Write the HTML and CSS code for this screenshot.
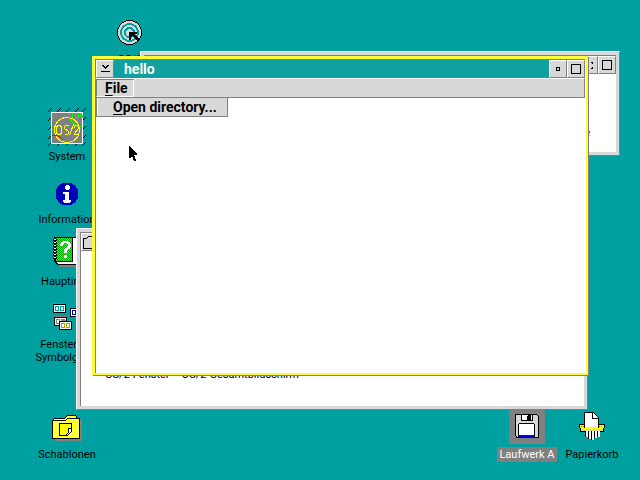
FILE: index.html
```
<!DOCTYPE html>
<html lang="de">
<head>
<meta charset="utf-8">
<title>hello</title>
<link rel="stylesheet" href="styles.css">
</head>
<body>
<main class="desktop">
  <div class="icon icon-os2">
    <svg width="26" height="26" viewBox="0 0 26 26" shape-rendering="crispEdges">
      <circle cx="12.500" cy="12.500" r="12" fill="#d8d8d8" stroke="#000"/>
      <g fill="none" stroke="#00a0a0" stroke-width="2"><circle cx="12.500" cy="12.500" r="8.500"/><circle cx="12.500" cy="12.500" r="4.500"/></g>
      <path d="M12 12h8v2h-3l1 1 1 1 1 1 2 2-2 2-5-5-1 1v3h-2z"/>
    </svg>
    <span>OS/2</span>
  </div>

  <div class="icon icon-system">
    <svg width="38" height="38" viewBox="0 0 38 38" shape-rendering="crispEdges">
      <path d="M0 4l4-4M9 4l4-4M18 4l4-4M27 4l4-4M34 4l4-4M0 13l4-4M0 22l4-4M0 31l4-4M0 38l4-4M9 38l4-4M18 38l4-4M27 38l4-4M34 13l4-4M34 22l4-4M34 31l4-4M34 38l4-4" stroke="#000"/>
      <rect x="3.500" y="4.500" width="31" height="31" fill="#808080" stroke="#fff"/>
      <circle cx="19" cy="22" r="12.500" fill="none" stroke="#ff0"/>
      <path d="M21.500 5v4h3V5M27.500 5v4h3V5M34 5.500h-2v2h2v2h-2M22 11l3 4 4 3h5" fill="none" stroke="#0f0"/>
      <path d="M4 27h4l4 2 3 3" fill="none" stroke="#f00"/>
      <path d="M9.500 17.500h3l1 2v5l-1 2h-3l-1-2v-5zM20.500 17.500h-3l-1 1v2l4 3v2l-1 1h-3M21.500 27.500l4-11M26.500 19.500v-1l1-1h2l1 1v2l-4 5v1h4" fill="none" stroke="#ff0"/>
    </svg>
    <span>System</span>
  </div>

  <div class="icon icon-info">
    <svg width="24" height="24" viewBox="0 0 24 24" shape-rendering="crispEdges">
      <circle cx="12" cy="12" r="11.500" fill="#0000b8"/>
      <path d="M11 3h3v1h1v3h-1v1h-3V7h-1V4h1zM8 10h6v8h2v2h-1v1H9v-1H8v-2h2v-6H8z" fill="#fff"/>
    </svg>
    <span>Information</span>
  </div>

  <div class="icon icon-index">
    <svg width="32" height="32" viewBox="0 0 32 32" shape-rendering="crispEdges">
      <defs><pattern id="green" width="2" height="2" patternUnits="userSpaceOnUse"><path d="M0 0h2v2H0z" fill="#00b000"/><path d="M0 0h1v1H0zM1 1h1v1H1z" fill="#40e040"/></pattern></defs>
      <path d="M4 28h27v3H7z" fill="#808080"/>
      <path d="M1 1h30v28H4l-3-3z"/>
      <path d="M2 2h28v26H5l-3-3z" fill="#fff"/>
      <path d="M2 1h18v25H2z"/>
      <path d="M3 2h16v23H3z" fill="url(#green)"/>
      <path d="M0 3h4v2H0zM0 6h4v2H0zM0 9h4v2H0zM0 12h4v2H0zM0 15h4v2H0zM0 18h4v2H0zM0 21h4v2H0z"/>
      <path d="M1 3h2v1H1zM1 6h2v1H1zM1 9h2v1H1zM1 12h2v1H1zM1 15h2v1H1zM1 18h2v1H1zM1 21h2v1H1z" fill="#fff"/>
      <path d="M8 6h2V5h5v1h2v2h1v3h-1v2h-2v1h-1v3h-3v-4h1v-1h2v-2h1V8h-1V7h-3v1h-1v2H7V8h1zM11 19h3v3h-3z" fill="#fff"/>
    </svg>
    <span>Hauptindex</span>
  </div>

  <div class="icon icon-windows">
    <svg width="30" height="28" viewBox="0 0 30 28" shape-rendering="crispEdges">
      <path d="M0 1h13v9H0z"/><path d="M1 2h11v7H1z" fill="#fff"/>
      <path d="M2 3h4v5H2zM7 3h4v5H7z" fill="#00a0a0"/><path d="M3 4h2v3H3zM8 4h2v3H8z" fill="#fff"/>
      <path d="M17 5h13v9H17z"/><path d="M18 6h11v7H18z" fill="#fff"/>
      <path d="M19 7h4v5h-4zM24 7h4v5h-4z" fill="#0000b8"/><path d="M20 8h2v3h-2zM25 8h2v3h-2z" fill="#fff"/>
      <path d="M1 14h13v9H1z"/><path d="M2 15h11v7H2z" fill="#fff"/>
      <path d="M3 16h4v5H3zM8 16h4v5H8z" fill="#808080"/><path d="M4 17h2v3H4z" fill="#fff"/>
      <path d="M6 18h13v9H6z"/><path d="M7 19h11v7H7z" fill="#fff"/>
      <path d="M8 20h4v5H8zM13 20h4v5h-4z" fill="#a8a000"/><path d="M9 21h2v3H9zM14 21h2v3h-2z" fill="#fff"/>
      <path d="M0 .5h13M17 4.500h13M1 13.500h13M6 17.500h13" stroke="#a08080" stroke-dasharray="1 1"/>
    </svg>
    <span>Fenster auf<br>Symbolgröße</span>
  </div>

  <div class="icon icon-templates">
    <svg width="30" height="26" viewBox="0 0 30 26" shape-rendering="crispEdges">
      <defs><pattern id="yellow" width="2" height="2" patternUnits="userSpaceOnUse"><path d="M0 0h2v2H0z" fill="#ffff30"/><path d="M0 0h1v1H0z" fill="#fff"/></pattern></defs>
      <path d="M3 5h27v21H3z" fill="#808080"/>
      <path d="M.5 5.500l2-2h10l3-3h8l2 3h2v20H.5z" fill="url(#yellow)" stroke="#000"/>
      <path d="M1 5.500h12l3-2h11" fill="none" stroke="#000"/>
      <path d="M7.500 8.500h12v8l-4 4h-8z" fill="#ff0" stroke="#000"/>
      <path d="M19.500 13.500h-3v4l-3 3h2l4-4z" fill="#fff" stroke="#000"/>
    </svg>
    <span>Schablonen</span>
  </div>

  <div class="icon icon-drive">
    <i class="picked"><svg width="24" height="24" viewBox="0 0 24 24" shape-rendering="crispEdges">
      <path d="M.5.500h21l2 2v21H2l-1.500-2z" fill="#d8d8d8" stroke="#000"/>
      <path d="M6 1h12v6H6z"/><path d="M7 1h6v5H7zM16 1h1v5h-1z" fill="#fff"/><path d="M12 2h2v4h-2z"/>
      <path d="M3.500 10.500l1-1h14l1 1v13h-16z" fill="#fff" stroke="#000"/>
      <path d="M4 21h15v2H4z" fill="#00f"/>
    </svg></i>
    <span>Laufwerk A</span>
  </div>

  <div class="icon icon-shredder">
    <svg width="26" height="29" viewBox="0 0 26 29" shape-rendering="crispEdges">
      <path d="M0 12h26v4h-1v4H1v-4H0z"/>
      <path d="M1 13h24v3h-1v3H2v-3H1z" fill="#ff0"/>
      <path d="M2 14.500h22" stroke="#807000" stroke-dasharray="1 1"/>
      <path d="M2 17h22v2H2z" fill="#d8d8a0"/>
      <path d="M5.500 15.500V.5h9l5 5v10z" fill="#fff" stroke="#000"/><path d="M13.500.5v6h6" fill="none" stroke="#000"/>
      <path d="M6 15h13v1H6z" fill="#ff0"/>
      <path d="M7.500 19v6M10.500 19v8M13.500 19v9M16.500 19v7M19.500 19v6" stroke="#fff" stroke-width="2"/>
      <path d="M6.500 19v6M9.500 19v8M12.500 19v9M15.500 19v7M18.500 19v6" stroke="#000"/>
    </svg>
    <span>Papierkorb</span>
  </div>

  <section class="window back-upper">
    <header class="titlebar">
      <span class="title"></span>
      <button class="tool" aria-label="Minimieren"><svg width="7" height="7" viewBox="0 0 7 7" shape-rendering="crispEdges"><path d="M.5 2V.5H2M5 .5h1.500V2M6.500 5v1.500H5M2 6.500H.5V5" fill="none" stroke="#000"/></svg></button>
      <button class="tool" aria-label="Maximieren"><b class="large"></b></button>
    </header>
    <div class="content"><span class="peek">e</span></div>
  </section>

  <section class="window back-lower">
    <header class="titlebar">
      <button class="tool" aria-label="Systemmenü"><svg width="14" height="14" viewBox="0 0 14 14" shape-rendering="crispEdges"><path d="M.5 13.500v-10h3l2-2h4l2 2h4v10z" fill="#d8d8d8" stroke="#000"/></svg></button>
      <span class="title"></span>
    </header>
    <div class="content"><ul class="names"><li>OS/2-Fenster</li><li>OS/2-Gesamtbildschirm</li></ul></div>
  </section>

  <section class="window active">
    <header class="titlebar">
      <button class="tool" aria-label="System menu"><svg width="9" height="8" viewBox="0 0 9 8" shape-rendering="crispEdges"><path d="M1 0h2v1h1v1h1V1h1V0h2v1H7v1H6v1H5v1H4V3H3V2H2V1H1zM0 6h9v1H0z"/></svg></button>
      <h1 class="title">hello</h1>
      <button class="tool" aria-label="Minimize"><b class="small"></b></button>
      <button class="tool" aria-label="Maximize"><b class="large"></b></button>
    </header>
    <nav class="menubar">
      <button class="menu"><u>F</u>ile</button>
      <div class="popup"><button class="entry"><u>O</u>pen directory...</button></div>
    </nav>
    <div class="content"></div>
  </section>

  <svg class="pointer" width="10" height="16" viewBox="0 0 10 16" shape-rendering="crispEdges"><path d="M1 0l8 8v1H6l1 2 1 3v1H6l-1-3-1-2-2 2H1z"/></svg>
</main>
</body>
</html>
```
FILE: styles.css
```
* { box-sizing: border-box; }
body { margin: 0; font: 11px/13px Roboto, "Liberation Sans", sans-serif; color: #000; }
button { font: inherit; color: inherit; padding: 0; border: 0; background: none; }
h1, ul { margin: 0; padding: 0; list-style: none; }
svg { display: block; }

.desktop { position: relative; min-height: 100vh; overflow: hidden; background: #00a0a0; }

.icon { position: absolute; display: flex; flex-direction: column; align-items: center; gap: 6px; width: 80px; text-align: center; }
.icon span { padding: 1px 2px; white-space: nowrap; }
.icon-os2 { left: 90px; top: 20px; }
.icon-system { left: 27px; top: 108px; gap: 3px; }
.icon-info { left: 27px; top: 182px; }
.icon-index { left: 29px; top: 236px; }
.icon-windows { left: 28px; top: 303px; }
.icon-templates { left: 27px; top: 415px; }
.icon-drive { right: 73px; bottom: 18px; gap: 3px; }
.icon-drive span { background: #808080; color: #fff; }
.icon-shredder { right: 8px; bottom: 18px; }
.picked { display: grid; place-items: center; width: 36px; height: 36px; background: #808080; }

.window { position: absolute; display: flex; flex-direction: column; padding: 3px; background: #d8d8d8; border: 1px solid; border-color: #fff #808080 #808080 #fff; }
.titlebar { display: flex; height: 19px; background: #d8d8d8; border-top: 1px solid #808080; border-left: 1px solid #808080; }
.title { flex: 1; }
.tool { display: grid; place-items: center; width: 18px; height: 18px; background: #d8d8d8; border: 1px solid; border-color: #fff #808080 #808080 #fff; }
.content { flex: 1; background: #fff; border-left: 1px solid #808080; }
.small { width: 4px; height: 4px; border: 1px solid #000; }
.large { width: 8px; height: 8px; border: 1px solid #000; }

.back-upper { left: 140px; right: 20px; top: 51px; height: 105px; }
.peek { display: block; padding: 52px 26px 0; text-align: right; }
.back-lower { left: 76px; right: 52px; top: 228px; bottom: 70px; }
.back-lower .tool { overflow: hidden; }
.names { display: flex; gap: 12px; padding: 117px 24px 0; }

.active {
  left: 92px; right: 52px; top: 56px; bottom: 105px;
  padding: 0; border: solid transparent; border-width: 3px 2px 2px 3px;
  background:
    linear-gradient(#fff, #fff) padding-box,
    repeating-conic-gradient(#ff0 0 25%, #ffff40 0 50%) 0 0 / 2px 2px border-box;
  box-shadow: 1px 1px #808080;
  font: bold 14px/16px Roboto, "Liberation Sans", sans-serif;
}
.active .titlebar { margin-right: 1px; background: repeating-conic-gradient(#00a8a8 0 25%, #10a0a0 0 50%) 0 0 / 2px 2px; }
.active .title { padding-left: 10px; font: inherit; line-height: 18px; color: #fff; }
.active .large, .back-upper .large { width: 10px; height: 10px; }
.menubar { position: relative; height: 20px; margin-right: 1px; background: #d8d8d8; border: 1px solid #808080; border-top-color: #fff; }
.menu { display: block; width: 38px; height: 18px; padding: 0 8px; line-height: 14px; text-align: left; border: 1px solid; border-color: #808080 #fff #fff #808080; }
.popup { position: absolute; left: 0; top: 18px; padding: 1px; background: #d8d8d8; border: 1px solid #808080; box-shadow: inset 1px 0 #fff; }
.entry { display: block; padding: 0 9px 0 15px; }
.active u { text-underline-offset: 2px; }
.pointer { position: absolute; left: 128px; top: 146px; }
```
